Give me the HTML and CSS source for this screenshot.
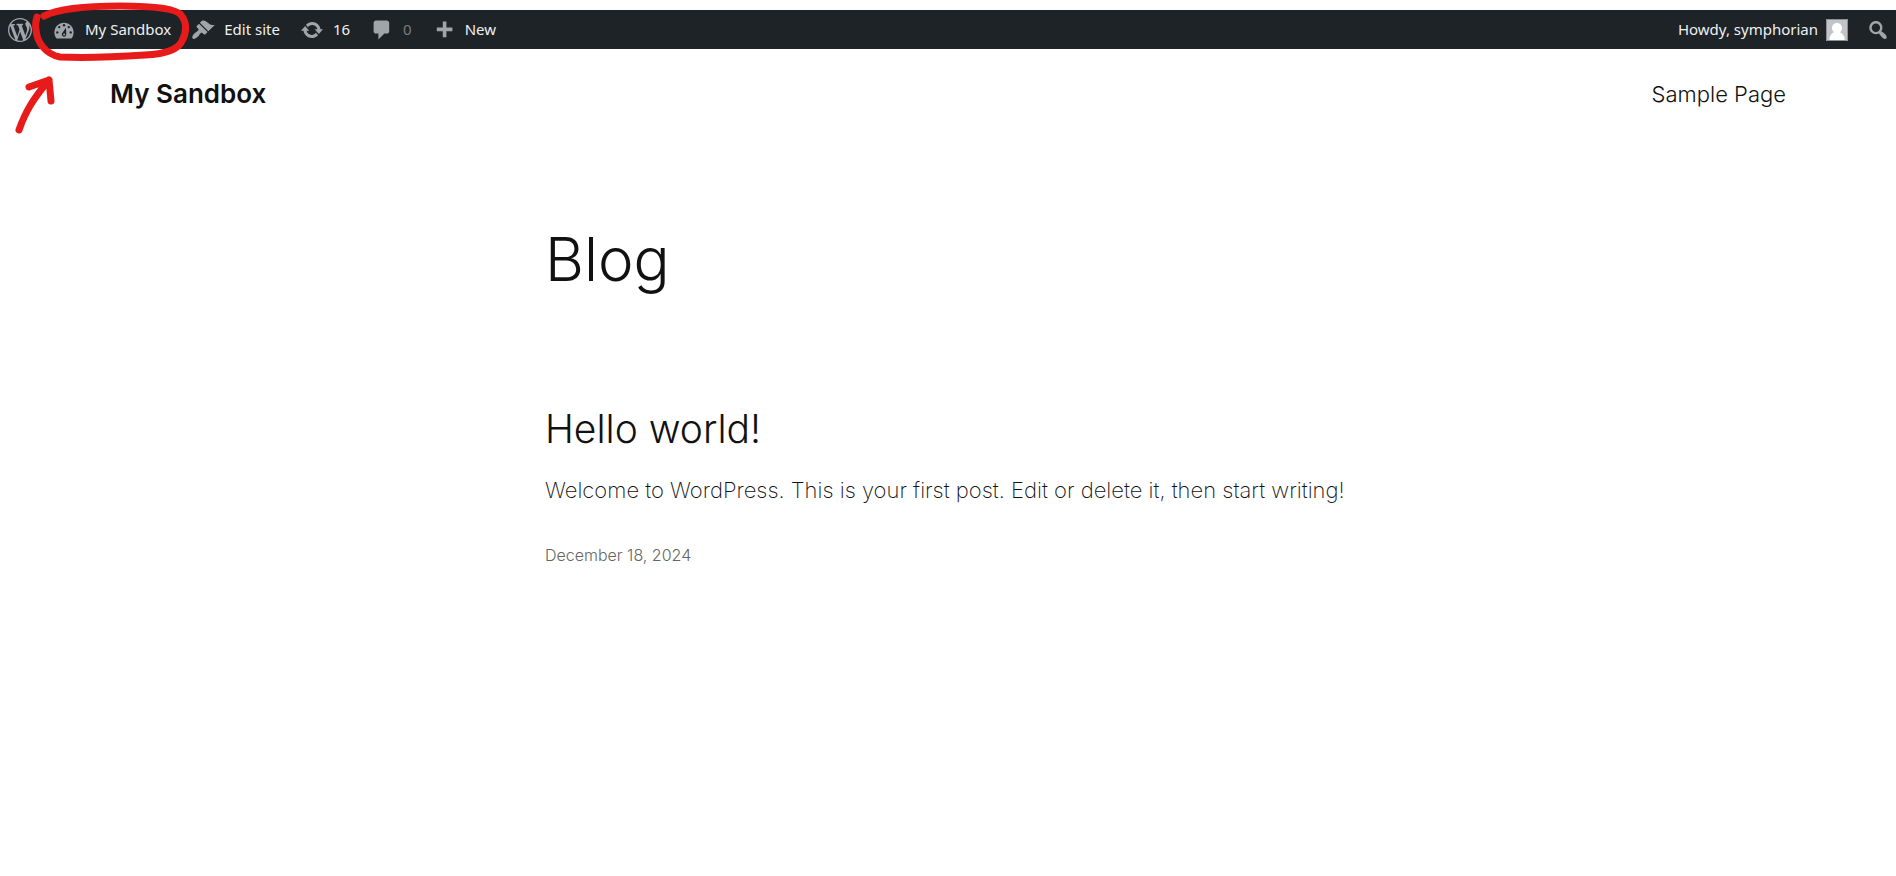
FILE: index.html
```html
<!DOCTYPE html>
<html lang="en">
<head>
<meta charset="utf-8">
<title>My Sandbox</title>
<link rel="stylesheet" href="styles.css">
</head>
<body>
<nav class="adminbar" aria-label="Toolbar">
  <a class="bar-item bar-logo" href="#" aria-label="About WordPress">
    <svg class="icon" viewBox="0 0 20 20"><path d="M20 10c0-5.51-4.49-10-10-10C4.48 0 0 4.49 0 10c0 5.52 4.48 10 10 10 5.51 0 10-4.48 10-10zM7.78 15.37L4.37 6.22c.55-.02 1.17-.08 1.17-.08.5-.06.44-1.13-.06-1.11 0 0-1.45.11-2.37.11-.18 0-.37 0-.58-.01C4.12 2.69 6.87 1.11 10 1.11c2.33 0 4.45.87 6.05 2.34-.68-.11-1.65.39-1.65 1.58 0 .74.45 1.36.9 2.1.35.61.55 1.36.55 2.46 0 1.49-1.4 5-1.4 5l-3.03-8.37c.54-.02.82-.17.82-.17.5-.05.44-1.25-.06-1.22 0 0-1.44.12-2.38.12-.87 0-2.33-.12-2.33-.12-.5-.03-.56 1.2-.06 1.22l.92.08 1.26 3.41zM17.41 10c.24-.64.74-1.87.43-4.25.7 1.29 1.05 2.71 1.05 4.25 0 3.29-1.73 6.24-4.4 7.78.97-2.59 1.94-5.2 2.92-7.78zM6.1 18.09C3.12 16.65 1.11 13.53 1.11 10c0-1.3.23-2.48.72-3.59C3.25 10.3 4.67 14.2 6.1 18.09zm4.03-6.63l2.58 6.98c-.86.29-1.76.45-2.71.45-.79 0-1.57-.11-2.29-.33.81-2.38 1.62-4.74 2.42-7.1z"/></svg>
  </a>
  <a class="bar-item" href="#">
    <svg class="icon" viewBox="0 0 20 20" aria-hidden="true"><path d="M3.76 17h12.48c1.1-1.37 1.76-3.11 1.76-5 0-4.42-3.58-8-8-8s-8 3.58-8 8c0 1.89.66 3.63 1.76 5z"/><g class="cutout"><circle cx="10" cy="6" r="1"/><circle cx="6" cy="7.6" r="1"/><circle cx="14" cy="7.6" r="1"/><circle cx="4.4" cy="12" r="1"/><circle cx="15.6" cy="12" r="1"/><path d="M11.6 8.2 8.3 13c-.5 1 .2 2.6 1.7 2.6s2-1.200 1.900-2.200z"/></g><circle cx="10.100" cy="13.700" r=".8"/></svg>
    <span>My Sandbox</span>
  </a>
  <a class="bar-item" href="#">
    <svg class="icon" viewBox="0 0 20 20" aria-hidden="true"><path d="M14.48 11.06L7.41 3.99l1.5-1.5c.5-.56 2.3-.47 3.51.32 1.21.8 1.43 1.28 2.91 2.1 1.18.64 2.45 1.26 4.45.85zm-.71.71L6.7 4.7 4.93 6.47c-.39.39-.39 1.02 0 1.41l1.06 1.06c.39.39.39 1.03 0 1.42-.6.6-1.43 1.11-2.21 1.69-.35.26-.7.53-1.01.84C1.43 14.23.4 16.08 1.4 17.07c.99 1 2.84-.03 4.18-1.36.31-.31.58-.66.85-1.02.57-.78 1.08-1.61 1.69-2.21.39-.39 1.02-.39 1.41 0l1.06 1.06c.39.39 1.02.39 1.41 0z"/></svg>
    <span>Edit site</span>
  </a>
  <a class="bar-item" href="#">
    <svg class="icon" viewBox="0 0 20 20" aria-hidden="true"><path d="M10.2 3.28c3.53 0 6.43 2.61 6.92 6h2.08l-3.5 4-3.5-4h2.32c-.45-1.97-2.21-3.45-4.32-3.45-1.45 0-2.73.71-3.54 1.78L4.95 5.66C6.23 4.2 8.11 3.28 10.2 3.28zm-.4 13.44c-3.52 0-6.43-2.61-6.92-6H.8l3.5-4c1.17 1.33 2.33 2.67 3.5 4H5.48c.45 1.97 2.21 3.45 4.32 3.45 1.45 0 2.73-.71 3.54-1.78l1.71 1.95c-1.28 1.46-3.15 2.38-5.25 2.38z"/></svg>
    <span>16</span>
  </a>
  <a class="bar-item" href="#">
    <svg class="icon" viewBox="0 0 20 20" aria-hidden="true"><path d="M5 2h9c1.1 0 2 .9 2 2v7c0 1.1-.9 2-2 2h-2l-5 5v-5H5c-1.1 0-2-.9-2-2V4c0-1.1.9-2 2-2z"/></svg>
    <span class="muted">0</span>
  </a>
  <a class="bar-item" href="#">
    <svg class="icon" viewBox="0 0 20 20" aria-hidden="true"><path d="M17 8v3h-5v5H9v-5H4V8h5V3h3v5h5z"/></svg>
    <span>New</span>
  </a>
  <a class="bar-item account" href="#">
    <span>Howdy, symphorian</span>
    <svg class="avatar" viewBox="0 0 22 22" aria-hidden="true"><path class="avatar-bg" d="M0 0h22v22H0z"/><path class="avatar-edge" d="M.5.5h21v21H.5z"/><path class="avatar-person" d="M11 4c3 0 5 2.200 5 5 0 2-1 3.600-2 4.300 2.500 1 4.500 3.500 4.700 7.700H3.300c.2-4.200 2.200-6.700 4.700-7.700C7 12.600 6 11 6 9c0-2.800 2-5 5-5z"/></svg>
  </a>
  <button class="bar-item bar-search" type="button" aria-label="Search">
    <svg class="icon" viewBox="0 0 20 20"><path d="M12.14 4.18c1.87 1.87 2.11 4.75.72 6.89.12.1.22.21.36.31.2.16.47.36.81.59.34.24.56.39.66.47.42.31.73.57.94.78.32.32.6.65.84 1 .25.35.44.69.59 1.04.14.35.21.68.18 1-.02.32-.14.59-.36.81s-.49.34-.81.36c-.31.02-.65-.04-.99-.19-.35-.14-.7-.34-1.04-.59-.35-.24-.68-.52-1-.84-.21-.21-.47-.52-.77-.93-.1-.13-.25-.35-.47-.66-.22-.32-.4-.57-.56-.78-.16-.2-.29-.35-.44-.5-2.07 1.09-4.69.76-6.44-.98-2.14-2.15-2.14-5.64 0-7.78 2.15-2.15 5.63-2.15 7.78 0zm-1.41 6.36c1.36-1.37 1.36-3.58 0-4.95-1.37-1.37-3.59-1.37-4.95 0-1.37 1.37-1.37 3.58 0 4.95 1.36 1.37 3.58 1.37 4.95 0z"/></svg>
  </button>
</nav>

<header class="site-header">
  <a class="site-title" href="#">My Sandbox</a>
  <a class="site-link" href="#">Sample Page</a>
</header>

<main class="content">
  <h1 class="page-title">Blog</h1>
  <article class="post">
    <h2 class="post-title"><a href="#">Hello world!</a></h2>
    <p class="post-text">Welcome to WordPress. This is your first post. Edit or delete it, then start writing!</p>
    <a class="post-date" href="#"><time datetime="2024-12-18">December 18, 2024</time></a>
  </article>
</main>

<svg class="annotation" viewBox="0 0 200 140" aria-hidden="true">
  <path d="M44 16C60 8 90 6 120 6C150 6 176 8 181 15C187 22 187 32 182 41C178 50 165 54 145 55C115 57 85 58 60 57C45 54 37 42 36 30C35 24 36 20 37 17"/>
  <path d="M19 130C26 110 34 98 49 80M29 87L49 80L51 101"/>
</svg>
</body>
</html>
```
FILE: styles.css
```css
* {
  box-sizing: border-box;
}

body {
  margin: 0;
  padding-top: 10px;
  background: #fff;
  color: #111;
  font-family: Inter, "Liberation Sans", sans-serif;
  font-weight: 300;
}

a {
  color: inherit;
  text-decoration: none;
}

.adminbar {
  display: flex;
  height: 39px;
  background: #1d2327;
  color: #f0f0f1;
  font: 400 15px/39px "Noto Sans", "Open Sans", sans-serif;
}

.bar-item {
  display: flex;
  align-items: center;
  gap: 9px;
  padding: 0 10px;
  border: 0;
  background: none;
}

.bar-logo {
  padding: 0 10px 0 8px;
}

.bar-search {
  padding: 0 6px 0 8px;
}

.icon {
  width: 24px;
  height: 24px;
  fill: #a0a5aa;
}

.cutout {
  fill: #1d2327;
}

.muted {
  color: #787c80;
}

.account {
  gap: 8px;
  margin-left: auto;
}

.avatar {
  width: 22px;
  height: 22px;
}

.avatar-bg {
  fill: #c3c4c7;
}

.avatar-edge {
  fill: none;
  stroke: #8c8f94;
}

.avatar-person {
  fill: #fff;
}

.site-header {
  display: flex;
  align-items: center;
  justify-content: space-between;
  padding: 25px 110px;
  line-height: 40px;
}

.site-title {
  font-size: 26px;
  font-weight: 600;
}

.site-link {
  font-size: 22px;
}

.content {
  max-width: 806px;
  margin: 0 auto;
  padding-top: 86px;
}

.page-title {
  margin: 0 0 112px;
  font-size: 60px;
  font-weight: 300;
  line-height: 68px;
}

.post-title {
  margin: 0;
  font-size: 39px;
  font-weight: 300;
  line-height: 48px;
}

.post-text {
  margin: 21px 0 37px;
  font-size: 22px;
  font-weight: 200;
  line-height: 32px;
  white-space: nowrap;
}

.post-date {
  color: #666;
  font-size: 16px;
  line-height: 24px;
}

.annotation {
  position: absolute;
  top: 0;
  left: 0;
  width: 200px;
  height: 140px;
  fill: none;
  stroke: #e81b1b;
  stroke-width: 7;
  stroke-linecap: round;
  stroke-linejoin: round;
  pointer-events: none;
}
```
